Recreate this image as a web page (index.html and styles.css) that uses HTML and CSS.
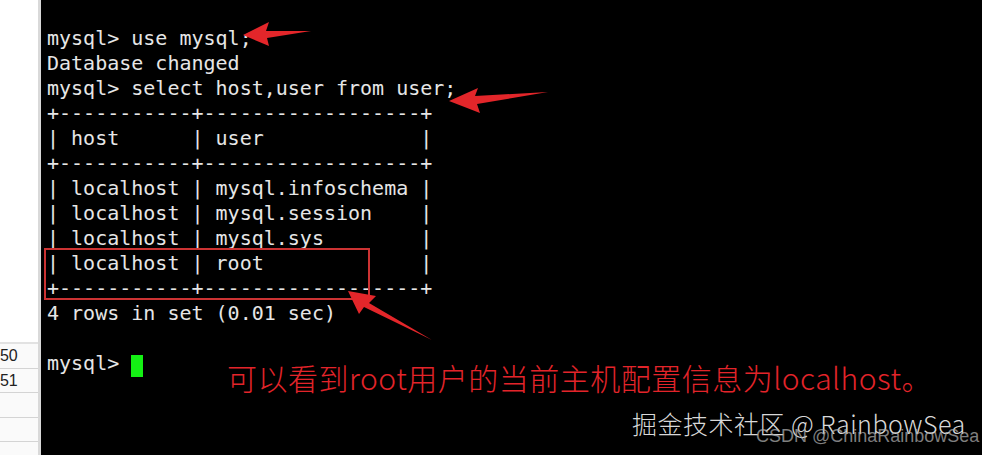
FILE: index.html
```html
<!DOCTYPE html>
<html lang="zh">
<head>
<meta charset="utf-8">
<title>mysql</title>
<link rel="stylesheet" href="styles.css">
</head>
<body>
<div class="screen">
  <aside class="side">
    <div class="side-blank"></div>
    <div class="side-rows">
      <div class="side-row">150</div>
      <div class="side-row">151</div>
      <div class="side-row"></div>
      <div class="side-row"></div>
      <div class="side-row"></div>
    </div>
  </aside>
  <main class="term">
<pre class="out">mysql&gt; use mysql;
Database changed
mysql&gt; select host,user from user;
+-----------+------------------+
| host      | user             |
+-----------+------------------+
| localhost | mysql.infoschema |
| localhost | mysql.session    |
| localhost | mysql.sys        |
| localhost | root             |
+-----------+------------------+
4 rows in set (0.01 sec)

mysql&gt; <span class="cursor"> </span></pre>
    <div class="hl-box"></div>
    <svg class="arrows" width="940" height="455" viewBox="42 0 940 455">
      <polygon fill="#e3262a" points="244,35 270,22 267,31 312,31 268,38 270,46"/>
      <polygon fill="#e3262a" points="450,101 479,88 476,96 549,92 478,104 481,113"/>
      <polygon fill="#e3262a" points="349,291 377,296 370,303 433,340 365,307 360,314"/>
    </svg>
    <p class="note">可以看到root用户的当前主机配置信息为localhost。</p>
    <div class="wm">
      <span class="wm-main">掘金技术社区 @ RainbowSea</span>
      <span class="wm-sub">CSDN @ChinaRainbowSea</span>
    </div>
  </main>
</div>
</body>
</html>
```
FILE: styles.css
```css
html, body {
  margin: 0;
  padding: 0;
  background: #000;
}
.screen {
  display: flex;
  width: 982px;
  height: 455px;
  overflow: hidden;
}
.side {
  width: 38px;
  flex: none;
  display: flex;
  flex-direction: column;
  background: #fff;
  border-right: 3px solid #d9d9d9;
  overflow: hidden;
  font-family: "Liberation Sans", Arial, sans-serif;
  font-size: 16px;
  color: #222;
}
.side-blank {
  flex: none;
  height: 342px;
}
.side-rows {
  border-top: 2px solid #e2e2e2;
  background: #fafafa;
}
.side-row {
  height: 23.5px;
  line-height: 23px;
  border-bottom: 1px solid #d4d4d4;
  margin-left: -9px;
  white-space: nowrap;
}
.term {
  position: relative;
  flex: 1;
  background: #000;
  padding: 26px 0 0 6px;
}
.out {
  margin: 0;
  font-family: "DejaVu Sans Mono", monospace;
  font-size: 20px;
  line-height: 25px;
  color: #e6e6e6;
}
.cursor {
  display: inline-block;
  width: 12px;
  height: 22px;
  background: #14f014;
  vertical-align: -4px;
}
.hl-box {
  position: absolute;
  left: 3px;
  top: 248px;
  width: 322px;
  height: 48px;
  border: 2px solid #cc3333;
}
.arrows {
  position: absolute;
  left: 0;
  top: 0;
}
.note {
  position: absolute;
  left: 186px;
  top: 357px;
  margin: 0;
  font-family: "Noto Sans CJK SC", "Noto Sans", sans-serif;
  font-size: 30px;
  font-weight: 300;
  line-height: 40px;
  letter-spacing: 0.5px;
  color: #e3242a;
  white-space: nowrap;
}
.wm {
  position: absolute;
  left: 0;
  top: 0;
}
.wm-main {
  position: absolute;
  left: 591px;
  top: 407px;
  font-family: "Noto Sans CJK SC", "Noto Sans", sans-serif;
  font-size: 25px;
  font-weight: 300;
  line-height: 32px;
  letter-spacing: 0.5px;
  color: #d8d8d8;
  white-space: nowrap;
}
.wm-sub {
  position: absolute;
  left: 715px;
  top: 426px;
  font-family: "Liberation Sans", Arial, sans-serif;
  font-size: 18px;
  line-height: 20px;
  color: rgba(170, 170, 170, 0.75);
  white-space: nowrap;
}
```
